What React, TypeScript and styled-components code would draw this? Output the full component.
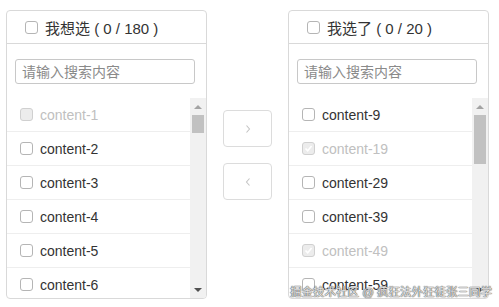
import styled, { createGlobalStyle } from 'styled-components';

const BORDER = '#d9d9d9';
const TEXT = '#333';
const MUTED = '#c0c0c0';

const GlobalStyle = createGlobalStyle`
    body {
        margin: 0;
        background: #fff;
        font-family: "Liberation Sans", "Noto Sans CJK SC", sans-serif;
        color: ${TEXT};
    }
`;

const Page = styled.div`
    position: relative;
    display: flex;
    align-items: flex-start;
    width: 499px;
    height: 307px;
    padding: 10px 0 0 6px;
    box-sizing: border-box;
`;

const Panel = styled.div`
    display: flex;
    flex-direction: column;
    width: 201px;
    height: 289px;
    border: 1px solid ${BORDER};
    border-radius: 4px;
    box-sizing: border-box;
    overflow: hidden;
`;

const Header = styled.div`
    display: flex;
    align-items: center;
    gap: 7px;
    height: 33px;
    padding-left: 18px;
    border-bottom: 1px solid ${BORDER};
    box-sizing: border-box;
    font-size: 15px;
`;

const Search = styled.input`
    width: 180px;
    height: 25px;
    margin: 15px 0 0 8px;
    padding: 0 6px;
    border: 1px solid #c8c8c8;
    border-radius: 3px;
    box-sizing: border-box;
    font-family: inherit;
    font-size: 14px;
    outline: none;

    &::placeholder {
        color: #8a8a8a;
    }
`;

const ListArea = styled.div`
    display: flex;
    flex: 1;
    margin-top: 14px;
    min-height: 0;
`;

const Items = styled.div`
    flex: 1;
    overflow: hidden;
`;

const Row = styled.div<{ $disabled?: boolean }>`
    display: flex;
    align-items: center;
    gap: 7px;
    height: 34px;
    padding-left: 13px;
    border-bottom: 1px solid #eee;
    box-sizing: border-box;
    font-size: 14px;
    color: ${({ $disabled }) => ($disabled ? MUTED : TEXT)};
`;

const Box = styled.span<{ $disabled?: boolean }>`
    display: inline-flex;
    align-items: center;
    justify-content: center;
    width: 13px;
    height: 13px;
    border: 1px solid ${({ $disabled }) => ($disabled ? '#d0d0d0' : '#b5b5b5')};
    border-radius: 3px;
    background: ${({ $disabled }) => ($disabled ? '#ececec' : '#fff')};
    box-sizing: border-box;
    flex-shrink: 0;
`;

const Scrollbar = styled.div`
    display: flex;
    flex-direction: column;
    width: 16px;
    background: #f1f1f1;
`;

const ArrowCell = styled.div<{ $down?: boolean }>`
    display: flex;
    align-items: center;
    justify-content: center;
    height: 17px;

    &::after {
        content: '';
        border-left: 4px solid transparent;
        border-right: 4px solid transparent;
        ${({ $down }) => ($down ? 'border-top: 4px solid #505050;' : 'border-bottom: 4px solid #a3a3a3;')}
    }
`;

const Track = styled.div`
    flex: 1;
    padding: 0 2px;
`;

const Thumb = styled.div<{ $height: number }>`
    height: ${({ $height }) => $height}px;
    background: #c1c1c1;
`;

const Buttons = styled.div`
    display: flex;
    flex-direction: column;
    gap: 16px;
    margin: 100px 16px 0;
`;

const MoveButton = styled.button`
    display: flex;
    align-items: center;
    justify-content: center;
    width: 49px;
    height: 37px;
    padding: 0;
    border: 1px solid #dcdcdc;
    border-radius: 4px;
    background: #fff;
`;

const Watermark = styled.div`
    position: absolute;
    right: 7px;
    bottom: 8px;
    font-size: 11.5px;
    white-space: nowrap;
    color: rgba(235, 235, 235, 0.95);
    text-shadow: 0 0 1px #666, 0 0 1px #666, 0 0 1px #666;
`;

const Check = ({ disabled, checked }: { disabled?: boolean; checked?: boolean }) => (
    <Box $disabled={disabled}>
        {checked && (
            <svg width="9" height="9" viewBox="0 0 9 9">
                <polyline points="1.5,4.5 3.7,6.8 7.6,2" fill="none" stroke="#fff" strokeWidth="1.6" />
            </svg>
        )}
    </Box>
);

type Item = { label: string; disabled?: boolean; checked?: boolean };

const left: Item[] = [1, 2, 3, 4, 5, 6, 7].map((n) => ({ label: `content-${n}`, disabled: n === 1 }));
const right: Item[] = [9, 19, 29, 39, 49, 59, 69].map((n) => ({
    label: `content-${n}`,
    disabled: n === 19 || n === 49,
    checked: n === 19 || n === 49,
}));

const TransferPanel = ({ title, items, thumb }: { title: string; items: Item[]; thumb: number }) => (
    <Panel>
        <Header>
            <Check />
            <span>{title}</span>
        </Header>
        <Search placeholder="请输入搜索内容" />
        <ListArea>
            <Items>
                {items.map(({ label, disabled, checked }) => (
                    <Row key={label} $disabled={disabled}>
                        <Check disabled={disabled} checked={checked} />
                        {label}
                    </Row>
                ))}
            </Items>
            <Scrollbar>
                <ArrowCell />
                <Track>
                    <Thumb $height={thumb} />
                </Track>
                <ArrowCell $down />
            </Scrollbar>
        </ListArea>
    </Panel>
);

const Chevron = ({ dir }: { dir: 'left' | 'right' }) => (
    <svg width="8" height="10" viewBox="0 0 8 10">
        <polyline
            points={dir === 'right' ? '2.5,1.5 5.5,5 2.5,8.5' : '5.5,1.5 2.5,5 5.5,8.5'}
            fill="none"
            stroke="#c4c4c4"
            strokeWidth="1.1"
        />
    </svg>
);

export default function App() {
    return (
        <>
            <GlobalStyle />
            <Page>
                <TransferPanel title="我想选 ( 0 / 180 )" items={left} thumb={18} />
                <Buttons>
                    <MoveButton><Chevron dir="right" /></MoveButton>
                    <MoveButton><Chevron dir="left" /></MoveButton>
                </Buttons>
                <TransferPanel title="我选了 ( 0 / 20 )" items={right} thumb={49} />
                <Watermark>掘金技术社区 @ 疯狂法外狂徒张三同学</Watermark>
            </Page>
        </>
    );
}
